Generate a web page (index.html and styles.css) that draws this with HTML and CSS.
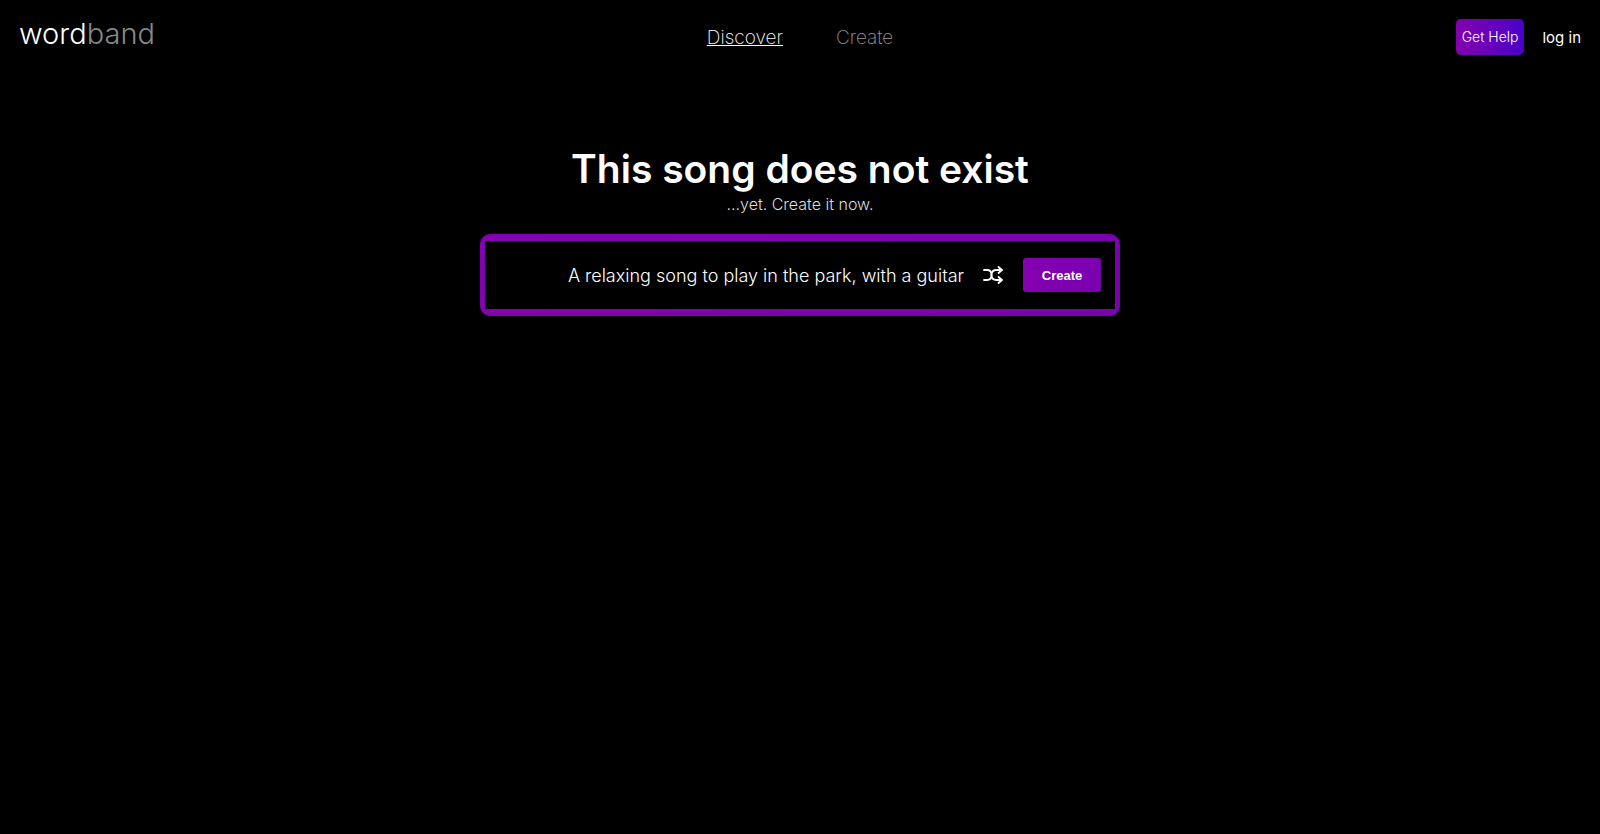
FILE: index.html
```html
<!DOCTYPE html>
<html lang="en">
<head>
<meta charset="utf-8">
<title>wordband</title>
<link rel="stylesheet" href="styles.css">
</head>
<body>
<header class="header">
  <a class="logo" href="#">word<span class="logo-dim">band</span></a>
  <nav class="nav">
    <a class="nav-link nav-link-active" href="#">Discover</a>
    <a class="nav-link" href="#">Create</a>
  </nav>
  <div class="account">
    <button class="help" type="button">Get Help</button>
    <a class="login" href="#">log in</a>
  </div>
</header>
<main class="main">
  <h1 class="title">This song does not exist</h1>
  <p class="subtitle">...yet. Create it now.</p>
  <form class="prompt">
    <div class="prompt-inner">
      <input class="prompt-input" type="text" aria-label="Song description" value="A relaxing song to play in the park, with a guitar">
      <button class="shuffle" type="button" aria-label="Shuffle">
        <svg width="20" height="20" viewBox="0 0 20 20" fill="none" stroke="currentColor" stroke-width="1.800" stroke-linecap="round" stroke-linejoin="round">
          <path d="M1 5h3c3 0 4.500 2 4.500 5s2 5 5 5h5"/>
          <path d="M1 15h3c3 0 4.500-2 4.500-5s2-5 5-5h5"/>
          <path d="M15.500 2l3.500 3-3.500 3"/>
          <path d="M15.500 12l3.500 3-3.500 3"/>
        </svg>
      </button>
      <button class="create" type="button">Create</button>
    </div>
  </form>
</main>
</body>
</html>
```

FILE: styles.css
```css
* { box-sizing: border-box; }
body {
  margin: 0;
  background: #000;
  color: #fff;
  font-family: Inter, "Liberation Sans", sans-serif;
}
a { color: inherit; text-decoration: none; }
button { border: 0; padding: 0; color: inherit; cursor: pointer; }
.header {
  display: grid;
  grid-template-columns: 1fr auto 1fr;
  align-items: center;
  height: 74px;
  padding: 0 19px;
}
.logo {
  padding-bottom: 6px;
  font-size: 29px;
  font-weight: 300;
  line-height: 36px;
}
.logo-dim { color: #888; }
.nav { display: flex; gap: 53px; padding-top: 2px; }
.nav-link {
  font-size: 19px;
  font-weight: 200;
  line-height: 24px;
  color: #999;
}
.nav-link-active {
  color: #fff;
  text-decoration: underline;
}
.account {
  display: flex;
  justify-content: flex-end;
  align-items: center;
  gap: 18px;
}
.help {
  height: 36px;
  padding: 0 6px;
  border-radius: 5px;
  background: linear-gradient(to right, #8400ae, #4b00c8);
  font-family: inherit;
  font-size: 14px;
  font-weight: 300;
  line-height: 16px;
}
.login { font-size: 15px; font-weight: 400; }
.main {
  display: flex;
  flex-direction: column;
  align-items: center;
  padding: 71px 16px 0;
}
.title {
  margin: 0;
  font-size: 39px;
  font-weight: 600;
  line-height: 48px;
}
.subtitle {
  margin: 0 0 19px;
  font-size: 16px;
  font-weight: 300;
  line-height: 22px;
  color: #ddd;
}
.prompt {
  width: 100%;
  max-width: 640px;
  padding: 7px 5px;
  border-radius: 10px;
  background: linear-gradient(to right, #8500b0, #7a00b0);
}
.prompt-inner {
  display: flex;
  align-items: center;
  height: 68px;
  padding-right: 14px;
  background: #000;
}
.prompt-input {
  flex: 1;
  min-width: 0;
  padding: 2px 19px 0 0;
  border: 0;
  outline: 0;
  background: none;
  color: #fff;
  font-family: inherit;
  font-size: 18px;
  font-weight: 300;
  line-height: 24px;
  text-align: right;
}
.shuffle {
  display: flex;
  margin-right: 20px;
  background: none;
}
.create {
  width: 78px;
  height: 34px;
  border-radius: 3px;
  background: linear-gradient(to right, #8500b0, #7a00b0);
  font-family: "Liberation Sans", Arial, sans-serif;
  font-size: 13px;
  font-weight: 700;
}
```
